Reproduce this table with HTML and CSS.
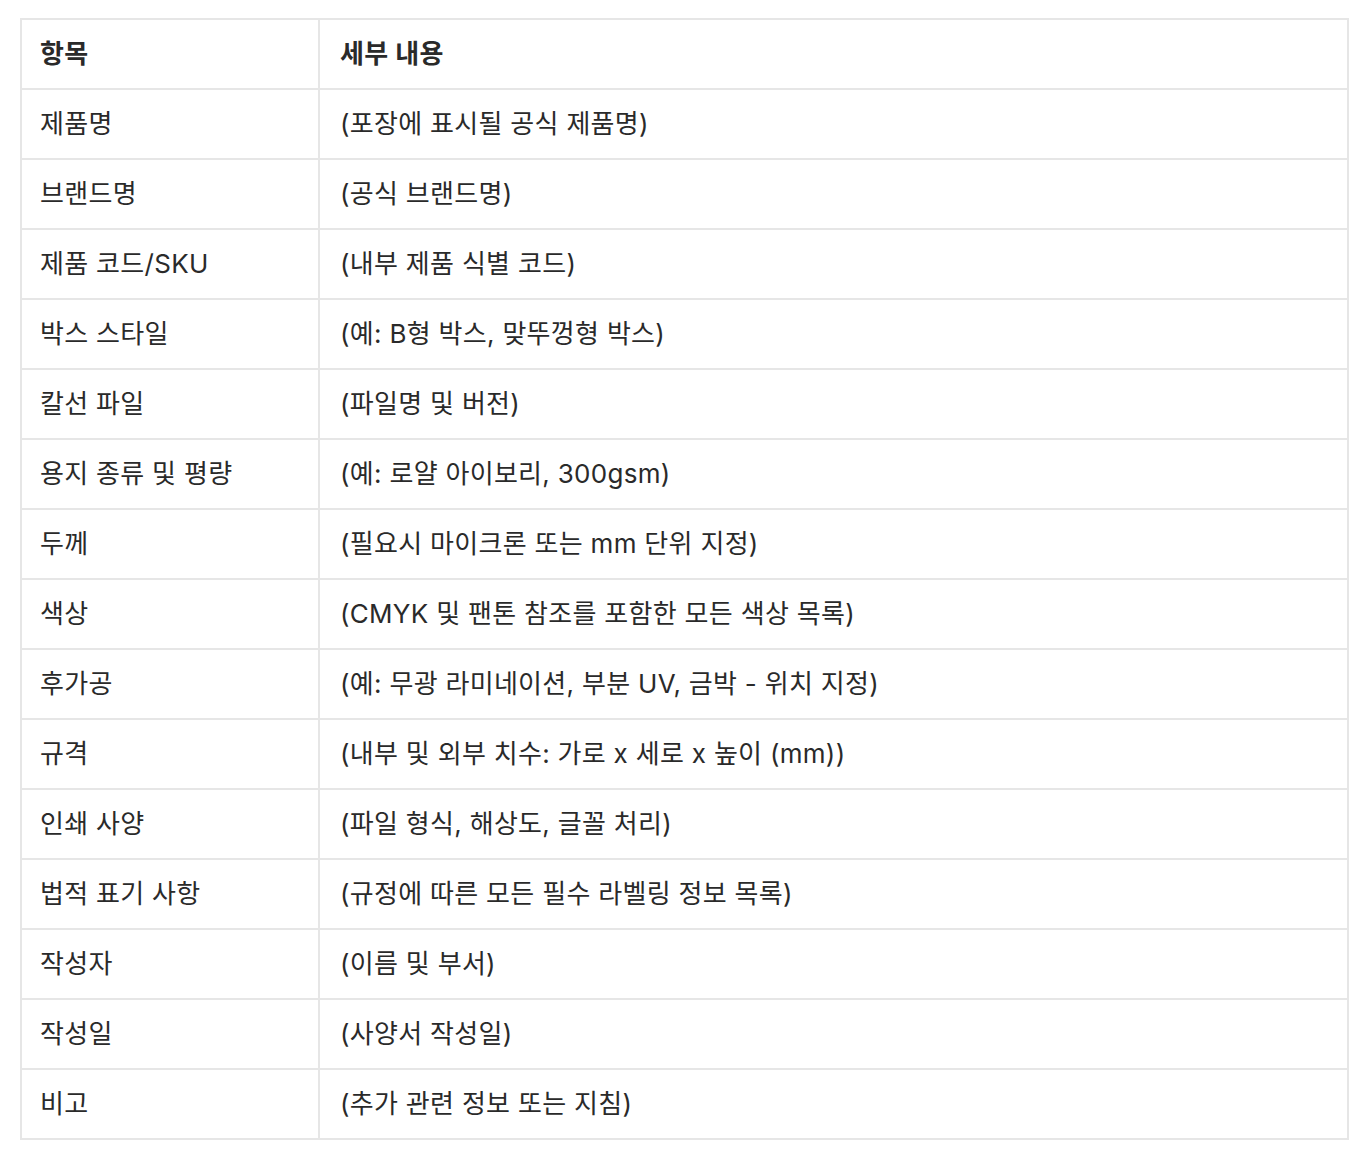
FILE: index.html
```html
<!DOCTYPE html>
<html lang="ko">
<head>
<meta charset="utf-8">
<title>사양서</title>
<link rel="stylesheet" href="styles.css">
</head>
<body>
<div class="wrap">
<table class="spec">
<thead>
<tr><th class="c1">항목</th><th class="c2">세부 내용</th></tr>
</thead>
<tbody>
<tr><td class="c1">제품명</td><td class="c2">(포장에 표시될 공식 제품명)</td></tr>
<tr><td class="c1">브랜드명</td><td class="c2">(공식 브랜드명)</td></tr>
<tr><td class="c1">제품 코드/SKU</td><td class="c2">(내부 제품 식별 코드)</td></tr>
<tr><td class="c1">박스 스타일</td><td class="c2">(예: B형 박스, 맞뚜껑형 박스)</td></tr>
<tr><td class="c1">칼선 파일</td><td class="c2">(파일명 및 버전)</td></tr>
<tr><td class="c1">용지 종류 및 평량</td><td class="c2">(예: 로얄 아이보리, 300gsm)</td></tr>
<tr><td class="c1">두께</td><td class="c2">(필요시 마이크론 또는 mm 단위 지정)</td></tr>
<tr><td class="c1">색상</td><td class="c2">(CMYK 및 팬톤 참조를 포함한 모든 색상 목록)</td></tr>
<tr><td class="c1">후가공</td><td class="c2">(예: 무광 라미네이션, 부분 UV, 금박 - 위치 지정)</td></tr>
<tr><td class="c1">규격</td><td class="c2">(내부 및 외부 치수: 가로 x 세로 x 높이 (mm))</td></tr>
<tr><td class="c1">인쇄 사양</td><td class="c2">(파일 형식, 해상도, 글꼴 처리)</td></tr>
<tr><td class="c1">법적 표기 사항</td><td class="c2">(규정에 따른 모든 필수 라벨링 정보 목록)</td></tr>
<tr><td class="c1">작성자</td><td class="c2">(이름 및 부서)</td></tr>
<tr><td class="c1">작성일</td><td class="c2">(사양서 작성일)</td></tr>
<tr><td class="c1">비고</td><td class="c2">(추가 관련 정보 또는 지침)</td></tr>
</tbody>
</table>
</div>
</body>
</html>
```
FILE: styles.css
```css
html, body {
  margin: 0;
  padding: 0;
  background: #ffffff;
}

.wrap {
  padding: 18px 19px 0 20px;
}

.spec {
  width: 100%;
  border-collapse: separate;
  border-spacing: 0;
  border-top: 2px solid #e6e6e6;
  border-left: 2px solid #e6e6e6;
  font-family: "Inter", "Noto Sans CJK KR", sans-serif;
  font-size: 26px;
  line-height: 32px;
  letter-spacing: 0.3px;
  color: #2a2a2a;
  table-layout: fixed;
}

.spec th,
.spec td {
  border-right: 2px solid #e6e6e6;
  border-bottom: 2px solid #e6e6e6;
  padding: 18px 18px;
  text-align: left;
  vertical-align: middle;
  white-space: nowrap;
}

.spec th {
  font-weight: 600;
}

.spec td {
  font-weight: 400;
}

.spec .c1 {
  width: 260px;
  padding-left: 18px;
}

.spec .c2 {
  padding-left: 20px;
}
```
